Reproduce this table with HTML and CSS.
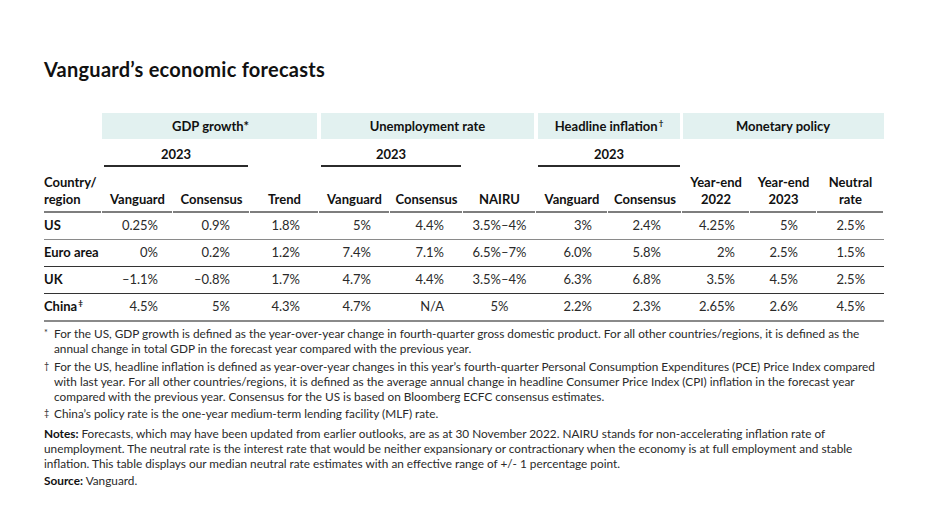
FILE: index.html
```html
<!DOCTYPE html>
<html lang="en">
<head>
<meta charset="utf-8">
<title>Vanguard's economic forecasts</title>
<link rel="stylesheet" href="styles.css">
</head>
<body>
<div class="page">
  <h1 class="title">Vanguard’s economic forecasts</h1>
  <table class="fc">
    <colgroup>
      <col class="w-country"><col class="w71"><col class="w77"><col class="w69">
      <col class="w71"><col class="w73"><col class="w73">
      <col class="w72"><col class="w74">
      <col class="w68"><col class="w67"><col class="w67">
    </colgroup>
    <thead>
      <tr class="band-row">
        <th></th>
        <th colspan="3" class="band band-first">GDP growth*</th>
        <th colspan="3" class="band">Unemployment rate</th>
        <th colspan="2" class="band">Headline inflation<sup class="sup">†</sup></th>
        <th colspan="3" class="band band-last">Monetary policy</th>
      </tr>
      <tr class="year-row">
        <th></th>
        <th colspan="2" class="year">2023</th>
        <th></th>
        <th colspan="2" class="year">2023</th>
        <th></th>
        <th colspan="2" class="year">2023</th>
        <th colspan="3"></th>
      </tr>
      <tr class="label-row">
        <th class="country">Country/<br>region</th>
        <th>Vanguard</th>
        <th>Consensus</th>
        <th>Trend</th>
        <th>Vanguard</th>
        <th>Consensus</th>
        <th>NAIRU</th>
        <th>Vanguard</th>
        <th>Consensus</th>
        <th>Year-end<br>2022</th>
        <th>Year-end<br>2023</th>
        <th>Neutral<br>rate</th>
      </tr>
    </thead>
    <tbody>
      <tr>
        <th class="country">US</th>
        <td>0.25%</td><td>0.9%</td><td>1.8%</td>
        <td>5%</td><td>4.4%</td><td>3.5%–4%</td>
        <td>3%</td><td>2.4%</td>
        <td>4.25%</td><td>5%</td><td>2.5%</td>
      </tr>
      <tr>
        <th class="country">Euro area</th>
        <td>0%</td><td>0.2%</td><td>1.2%</td>
        <td>7.4%</td><td>7.1%</td><td>6.5%–7%</td>
        <td>6.0%</td><td>5.8%</td>
        <td>2%</td><td>2.5%</td><td>1.5%</td>
      </tr>
      <tr>
        <th class="country">UK</th>
        <td>–1.1%</td><td>–0.8%</td><td>1.7%</td>
        <td>4.7%</td><td>4.4%</td><td>3.5%–4%</td>
        <td>6.3%</td><td>6.8%</td>
        <td>3.5%</td><td>4.5%</td><td>2.5%</td>
      </tr>
      <tr>
        <th class="country">China<sup class="sup">‡</sup></th>
        <td>4.5%</td><td>5%</td><td>4.3%</td>
        <td>4.7%</td><td>N/A</td><td>5%</td>
        <td>2.2%</td><td>2.3%</td>
        <td>2.65%</td><td>2.6%</td><td>4.5%</td>
      </tr>
    </tbody>
  </table>

  <div class="notes">
    <p class="fn fn-1"><span class="mark">*</span><span class="fn-text">For the US, GDP growth is defined as the year-over-year change in fourth-quarter gross domestic product. For all other countries/regions, it is defined as the<br>annual change in total GDP in the forecast year compared with the previous year.</span></p>
    <p class="fn fn-2"><span class="mark">†</span><span class="fn-text">For the US, headline inflation is defined as year-over-year changes in this year’s fourth-quarter Personal Consumption Expenditures (PCE) Price Index compared<br>with last year. For all other countries/regions, it is defined as the average annual change in headline Consumer Price Index (CPI) inflation in the forecast year<br>compared with the previous year. Consensus for the US is based on Bloomberg ECFC consensus estimates.</span></p>
    <p class="fn fn-3"><span class="mark">‡</span><span class="fn-text">China’s policy rate is the one-year medium-term lending facility (MLF) rate.</span></p>
    <p class="note"><b>Notes:</b> Forecasts, which may have been updated from earlier outlooks, are as at 30 November 2022. NAIRU stands for non-accelerating inflation rate of<br>unemployment. The neutral rate is the interest rate that would be neither expansionary or contractionary when the economy is at full employment and stable<br>inflation. This table displays our median neutral rate estimates with an effective range of +/- 1 percentage point.</p>
    <p class="note source"><b>Source:</b> Vanguard.</p>
  </div>
</div>
</body>
</html>
```

FILE: styles.css
```css
html, body {
  margin: 0;
  padding: 0;
  background: #ffffff;
}

body {
  font-family: Lato, "Noto Sans", "Liberation Sans", sans-serif;
  color: #1a1a1a;
}

.page {
  padding: 57px 0 0 44px;
  width: 886px;
}

.title {
  margin: 0;
  font-size: 20px;
  line-height: 24px;
  font-weight: 700;
  color: #111;
  letter-spacing: 0.25px;
}

/* ---------- table ---------- */
.fc {
  margin-top: 32px;
  width: 840px;
  table-layout: fixed;
  border-collapse: separate;
  border-spacing: 0;
  font-size: 13px;
}

.w-country { width: 58px; }
.w67 { width: 67px; }
.w68 { width: 68px; }
.w69 { width: 69px; }
.w71 { width: 71px; }
.w72 { width: 72px; }
.w73 { width: 73px; }
.w74 { width: 74px; }
.w77 { width: 77px; }

.fc th {
  font-weight: 700;
  color: #111;
  padding: 0;
  white-space: nowrap;
}

.sup {
  font-size: 8px;
  vertical-align: 5px;
  line-height: 0;
  margin-left: 1px;
}

/* group bands */
.band-row th {
  height: 26px;
  line-height: 26px;
  text-align: center;
}

.band {
  background: #e2f1f0;
  box-shadow: inset 2px 0 0 #fff, inset -2px 0 0 #fff;
}

.band-first {
  box-shadow: inset -2px 0 0 #fff;
}

.band-last {
  box-shadow: inset 1px 0 0 #fff;
}

/* year row */
.year-row th {
  height: 28px;
  box-sizing: border-box;
  padding: 7px 0 4px;
  line-height: 17px;
  text-align: center;
}

.year {
  background: linear-gradient(#2b2b2b, #2b2b2b) 2px 100% / calc(100% - 4px) 2px no-repeat;
}

/* column labels */
.label-row th {
  padding: 7px 0 5px;
  line-height: 17px;
  text-align: center;
  vertical-align: bottom;
  background: linear-gradient(#7e7e7e, #7e7e7e) 0 100% / calc(100% - 1px) 2px no-repeat;
}

.fc th.country {
  text-align: left;
}

/* body */
.fc tbody th,
.fc tbody td {
  height: 26px;
  box-sizing: border-box;
  padding: 0 19px 1px 0;
  line-height: 25px;
  border-bottom: 1px solid #333;
  vertical-align: middle;
}

.fc tbody th {
  padding-right: 0;
}

.fc tbody td {
  text-align: right;
  color: #2a2a2a;
  font-weight: 400;
}

.fc tbody tr:first-child th,
.fc tbody tr:first-child td {
  border-bottom: 1px solid #8a8a8a;
}

.fc tbody tr:last-child th,
.fc tbody tr:last-child td {
  border-bottom: 2px solid #8a8a8a;
}

.fc tbody td:nth-child(2) { padding-right: 15px; }
.fc tbody td:nth-child(3) { padding-right: 20px; }
.fc tbody td:nth-child(7) { padding-right: 0; text-align: center; }
.fc tbody td:nth-child(8) { padding-right: 16px; }
.fc tbody td:nth-child(9) { padding-right: 21px; }
.fc tbody td:nth-child(10) { padding-right: 15px; }

/* ---------- notes ---------- */
.notes {
  margin-top: 4px;
  font-size: 11.8px;
  line-height: 15px;
  color: #2a2a2a;
  white-space: nowrap;
}

.notes .fn,
.notes .note {
  margin: 0;
}

.fn {
  display: flex;
}

.mark {
  flex: 0 0 10px;
  font-size: 9px;
  line-height: 13px;
}

.notes .fn-1 { margin-bottom: 3px; }
.notes .fn-2 { margin-bottom: 2px; }
.notes .fn-3 { margin-bottom: 5px; }
.notes .source { margin-top: 2px; }

.note b {
  color: #111;
}
```
